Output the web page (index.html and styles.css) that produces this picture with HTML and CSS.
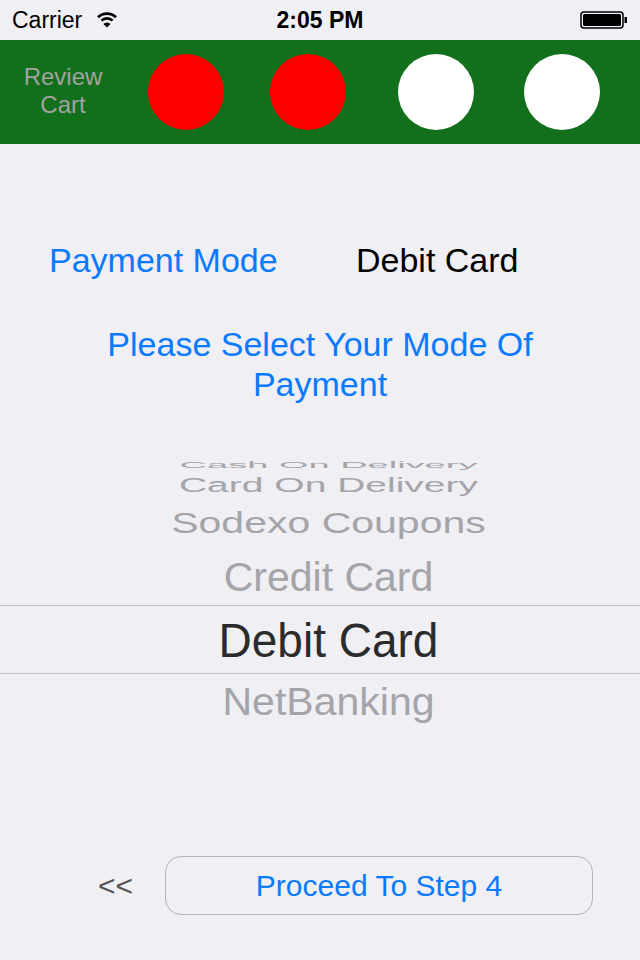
FILE: index.html
```html
<!DOCTYPE html>
<html>
<head>
<meta charset="utf-8">
<link rel="stylesheet" href="styles.css">
</head>
<body>
<div class="screen">
  <div class="status">
    <div class="status-left">
      <span class="carrier">Carrier</span>
      <svg class="wifi" width="20" height="17" viewBox="0 0 20 17">
        <path d="M1 6.2 A13 13 0 0 1 19 6.2" fill="none" stroke="#000" stroke-width="2.6"/>
        <path d="M4.4 9.6 A8.2 8.2 0 0 1 15.6 9.6" fill="none" stroke="#000" stroke-width="2.6"/>
        <path d="M6.4 13 L10 16.6 L13.6 13 A5 5 0 0 0 6.4 13 Z" fill="#000"/>
      </svg>
    </div>
    <div class="time">2:05 PM</div>
    <div class="status-right">
      <svg class="battery" width="48" height="18" viewBox="0 0 48 18">
        <rect x="1" y="1" width="42" height="16" rx="3" fill="none" stroke="#000" stroke-width="1.5"/>
        <rect x="3" y="3" width="38" height="12" rx="1.5" fill="#000"/>
        <rect x="44.5" y="6" width="2.5" height="6" fill="#000"/>
      </svg>
    </div>
  </div>

  <div class="steps">
    <div class="review">Review<br>Cart</div>
    <div class="dot red"></div>
    <div class="dot red d2"></div>
    <div class="dot white d3"></div>
    <div class="dot white d4"></div>
  </div>

  <div class="mode-row">
    <span class="mode-label">Payment Mode</span>
    <span class="mode-value">Debit Card</span>
  </div>

  <div class="prompt">Please Select Your Mode Of<br>Payment</div>

  <div class="picker">
    <div class="row r-cash"><span>Cash On Delivery</span></div>
    <div class="row r-cod"><span>Card On Delivery</span></div>
    <div class="row r-sodexo"><span>Sodexo Coupons</span></div>
    <div class="row r-credit"><span>Credit Card</span></div>
    <div class="row r-debit"><span>Debit Card</span></div>
    <div class="row r-net"><span>NetBanking</span></div>
  </div>

  <div class="bottom">
    <span class="back">&lt;&lt;</span>
    <div class="proceed">Proceed To Step 4</div>
  </div>
</div>
</body>
</html>
```

FILE: styles.css
```css
html, body {
  margin: 0;
  padding: 0;
}
body {
  background: #efeff4;
  font-family: "Liberation Sans", Arial, sans-serif;
}
.screen {
  width: 640px;
  height: 960px;
  overflow: hidden;
  background: #efeff4;
}
.status {
  height: 40px;
  display: flex;
  align-items: center;
  justify-content: space-between;
  padding: 0 12px;
  position: relative;
}
.status-left {
  display: flex;
  align-items: center;
  gap: 15px;
}
.carrier {
  font-size: 23px;
  color: #000;
}
.wifi {
  margin-top: -2px;
}
.time {
  position: absolute;
  left: 0;
  right: 0;
  text-align: center;
  font-weight: bold;
  font-size: 23px;
  color: #000;
  pointer-events: none;
}
.status-right {
  display: flex;
  align-items: center;
  margin-right: 0;
}
.steps {
  height: 104px;
  background: #126f1b;
  display: flex;
  align-items: center;
}
.review {
  width: 126px;
  text-align: center;
  color: #a3a3a3;
  font-size: 24px;
  line-height: 28px;
  margin-top: -2px;
}
.dot {
  width: 76px;
  height: 76px;
  border-radius: 50%;
  margin-left: 22px;
}
.dot.d2 { margin-left: 46px; }
.dot.d3 { margin-left: 52px; }
.dot.d4 { margin-left: 50px; }
.red { background: #ff0000; }
.white { background: #ffffff; }

.mode-row {
  display: flex;
  align-items: center;
  margin-top: 94px;
  height: 44px;
  padding-left: 49px;
  font-size: 34px;
}
.mode-label {
  color: #0a7aff;
  width: 307px;
}
.mode-value {
  color: #000;
}
.prompt {
  margin-top: 42px;
  text-align: center;
  color: #0a7aff;
  font-size: 34px;
  line-height: 40px;
}
.picker {
  margin-top: 56px;
  height: 280px;
  overflow: hidden;
  display: flex;
  flex-direction: column;
  padding-left: 17px;
}
.row {
  display: flex;
  align-items: center;
  justify-content: center;
  flex: none;
  color: #a4a4a9;
  font-size: 41px;
  line-height: 1;
  white-space: nowrap;
}
.row span {
  display: block;
}
.r-cash { height: 10px; align-items: flex-end; }
.r-cash span { font-size: 38px; transform: scaleY(0.22); margin-bottom: -14px; }
.r-cod { height: 28px; }
.r-cod span { font-size: 39px; transform: scaleY(0.54); }
.r-sodexo { height: 51px; }
.r-sodexo span { transform: scaleY(0.74); }
.r-credit { height: 56px; }
.r-credit span { transform: scaleY(0.98); }
.r-debit {
  height: 67px;
  border-top: 1px solid #c2c1c7;
  border-bottom: 1px solid #c2c1c7;
  color: #2b2b2b;
  margin-left: -17px;
  padding-left: 17px;
}
.r-debit span { font-size: 46px; transform: scaleY(1.05); }
.r-net { height: 56px; }
.r-net span { transform: scaleY(0.95); }

.bottom {
  margin-top: 116px;
  display: flex;
  align-items: center;
  padding-left: 98px;
}
.back {
  font-size: 30px;
  color: #555;
  width: 67px;
}
.proceed {
  width: 426px;
  height: 57px;
  border: 1px solid #b4b4b4;
  border-radius: 16px;
  display: flex;
  align-items: center;
  justify-content: center;
  color: #0a7aff;
  font-size: 30px;
}
```
